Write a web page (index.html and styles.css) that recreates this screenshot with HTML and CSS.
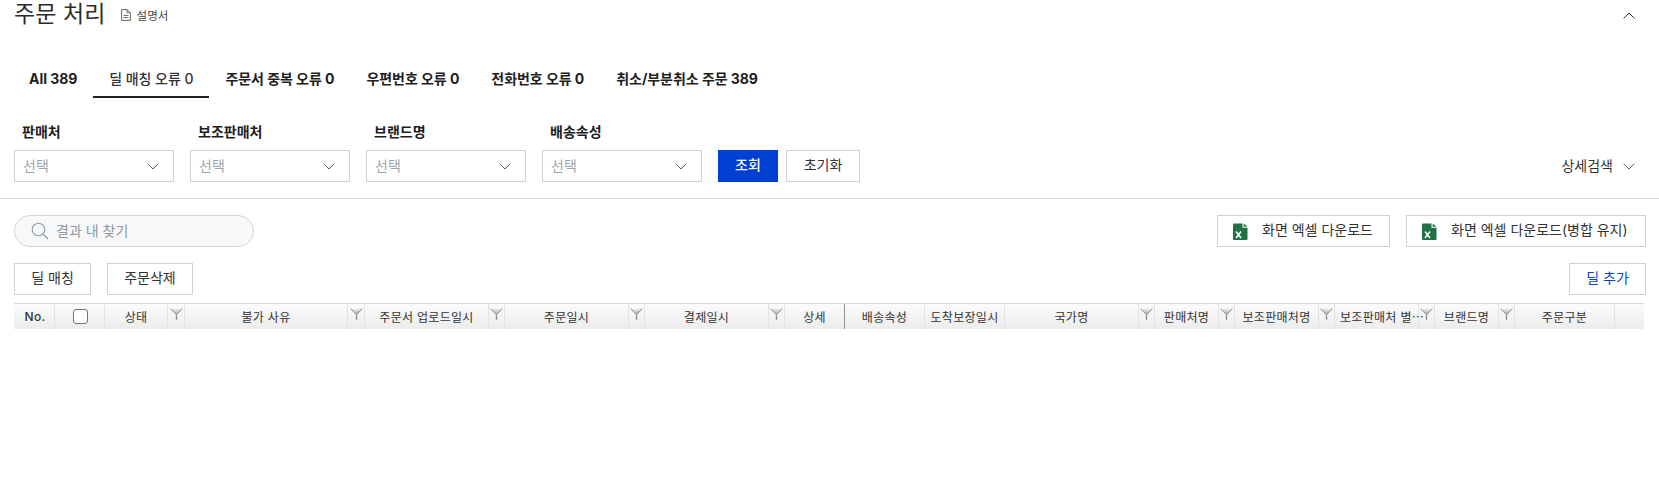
FILE: index.html
```html
<!DOCTYPE html>
<html lang="ko">
<head>
<meta charset="utf-8">
<title>주문 처리</title>
<link rel="stylesheet" href="styles.css">
</head>
<body>
<svg class="sprite" width="0" height="0" aria-hidden="true">
  <defs>
    <linearGradient id="fg" x1="0" y1="0" x2="0" y2="1"><stop offset="0" stop-color="#f0f0f0"/><stop offset=".45" stop-color="#b5b5b5"/><stop offset="1" stop-color="#6e6e6e"/></linearGradient>
  </defs>
  <symbol id="chev" viewBox="0 0 12 7"><path d="M.6.6L6 6l5.4-5.4" fill="none" stroke="currentColor" stroke-width="1"/></symbol>
  <symbol id="funnel" viewBox="0 0 13 12"><path d="M1 .5h11L7.2 6v5.5H5.8V6z" fill="url(#fg)"/><path d="M.6.6L6.2 6.4M12.4.6L6.8 6.4" fill="none" stroke="#7d7d7d" stroke-width=".9"/></symbol>
  <symbol id="xls" viewBox="0 0 15 17"><path d="M0 1.5A1 1 0 0 1 1 .5h8.5v4.2h5V16a1 1 0 0 1-1 1H1a1 1 0 0 1-1-1z" fill="#1f7244"/><path d="M10.6.5l3.9 3.2h-3.9z" fill="#1f7244"/><path d="M3 8.5l5 6.5M8 8.5L3 15" stroke="#fff" stroke-width="1.5"/></symbol>
</svg>

<header class="title-bar">
  <div class="title-left">
    <h1 class="title">주문 처리</h1>
    <a class="manual">
      <svg class="manual-icon" viewBox="0 0 10 12"><path d="M.6.6h5.6l3.2 3v7.8H.6zM2.6 6.4h4.8M2.6 8.6h4.8M6 .8v3h3" fill="none" stroke="#555" stroke-width=".9"/></svg>
      설명서
    </a>
  </div>
  <svg class="chev up"><use href="#chev"/></svg>
</header>

<nav class="tabs">
  <a class="tab">All 389</a>
  <a class="tab active">딜 매칭 오류 0</a>
  <a class="tab">주문서 중복 오류 0</a>
  <a class="tab">우편번호 오류 0</a>
  <a class="tab">전화번호 오류 0</a>
  <a class="tab">취소/부분취소 주문 389</a>
</nav>

<section class="filters">
  <div class="field"><label class="field-label">판매처</label><div class="select"><span>선택</span><svg class="chev"><use href="#chev"/></svg></div></div>
  <div class="field"><label class="field-label">보조판매처</label><div class="select"><span>선택</span><svg class="chev"><use href="#chev"/></svg></div></div>
  <div class="field"><label class="field-label">브랜드명</label><div class="select"><span>선택</span><svg class="chev"><use href="#chev"/></svg></div></div>
  <div class="field"><label class="field-label">배송속성</label><div class="select"><span>선택</span><svg class="chev"><use href="#chev"/></svg></div></div>
  <button class="btn primary">조회</button>
  <button class="btn reset">초기화</button>
  <div class="more">상세검색<svg class="chev"><use href="#chev"/></svg></div>
</section>

<section class="toolbar">
  <div class="row">
    <div class="search">
      <svg class="search-icon" viewBox="0 0 18 18"><circle cx="7.5" cy="7.5" r="6.3" fill="none" stroke="#8f979e" stroke-width="1.1"/><path d="M12 12l5 5" stroke="#8f979e" stroke-width="1.1"/></svg>
      <span>결과 내 찾기</span>
    </div>
    <div class="excel-group">
      <button class="btn excel b1"><svg class="xls"><use href="#xls"/></svg>화면 엑셀 다운로드</button>
      <button class="btn excel b2"><svg class="xls"><use href="#xls"/></svg>화면 엑셀 다운로드(병합 유지)</button>
    </div>
  </div>
  <div class="row second">
    <div class="action-group">
      <button class="btn match">딜 매칭</button>
      <button class="btn del">주문삭제</button>
    </div>
    <button class="btn add">딜 추가</button>
  </div>
</section>

<div class="grid-head">
  <div class="cell latin">No.</div>
  <div class="cell check-cell"><span class="check"></span></div>
  <div class="cell">상태</div>
  <div class="cell fil"><svg class="funnel"><use href="#funnel"/></svg></div>
  <div class="cell">불가 사유</div>
  <div class="cell fil"><svg class="funnel"><use href="#funnel"/></svg></div>
  <div class="cell">주문서 업로드일시</div>
  <div class="cell fil"><svg class="funnel"><use href="#funnel"/></svg></div>
  <div class="cell">주문일시</div>
  <div class="cell fil"><svg class="funnel"><use href="#funnel"/></svg></div>
  <div class="cell">결제일시</div>
  <div class="cell fil"><svg class="funnel"><use href="#funnel"/></svg></div>
  <div class="cell frozen">상세</div>
  <div class="cell">배송속성</div>
  <div class="cell">도착보장일시</div>
  <div class="cell">국가명</div>
  <div class="cell fil"><svg class="funnel"><use href="#funnel"/></svg></div>
  <div class="cell">판매처명</div>
  <div class="cell fil"><svg class="funnel"><use href="#funnel"/></svg></div>
  <div class="cell">보조판매처명</div>
  <div class="cell fil"><svg class="funnel"><use href="#funnel"/></svg></div>
  <div class="cell clip">보조판매처 별⋯</div>
  <div class="cell fil"><svg class="funnel"><use href="#funnel"/></svg></div>
  <div class="cell">브랜드명</div>
  <div class="cell fil"><svg class="funnel"><use href="#funnel"/></svg></div>
  <div class="cell">주문구분</div>
  <div class="cell last"></div>
</div>
</body>
</html>
```
FILE: styles.css
```css
* { box-sizing: border-box; }
html, body { margin: 0; padding: 0; }
body {
  width: 1659px;
  height: 490px;
  overflow: hidden;
  background: #fff;
  color: #222;
  font-family: Inter, "Noto Sans CJK KR", "Noto Sans", sans-serif;
}
.sprite { position: absolute; }

.title-bar {
  height: 28px;
  padding: 1px 24px 0 14px;
  display: flex;
  align-items: center;
  justify-content: space-between;
}
.title-left { display: flex; align-items: center; gap: 15px; }
.title {
  margin: 0;
  font-size: 23px;
  font-weight: 400;
  line-height: 25px;
  letter-spacing: 0.1px;
  color: #2b2b2b;
}
.manual { display: flex; align-items: center; gap: 6px; font-size: 11.5px; color: #444; }
.manual-icon { width: 10px; height: 12px; }
.chev { width: 12px; height: 7px; color: #666; flex: none; display: block; }
.chev.up { transform: rotate(180deg); color: #333; margin-top: 1px; }

.tabs { display: flex; margin-top: 32px; height: 38px; padding-left: 13px; }
.tab {
  padding: 0 16px;
  height: 38px;
  line-height: 38px;
  font-size: 14px;
  font-weight: 700;
  letter-spacing: -0.05px;
  color: #1e1e1e;
  white-space: nowrap;
}
.tab.active { border-bottom: 2px solid #222; font-weight: 500; color: #333; }

.filters {
  position: relative;
  height: 101px;
  padding: 26px 14px 0;
  display: flex;
  gap: 16px;
  border-bottom: 1px solid #dcdfe1;
}
.field { width: 160px; }
.field-label {
  display: block;
  height: 26px;
  padding-left: 8px;
  font-size: 14px;
  font-weight: 700;
  line-height: 16px;
  color: #1e1e1e;
}
.select {
  height: 32px;
  padding: 0 14px 3px 8px;
  border: 1px solid #cfd2d4;
  display: flex;
  align-items: center;
  justify-content: space-between;
  font-size: 14px;
  color: #a0a6ab;
}
.select .chev { margin-top: 3px; }
.btn {
  height: 32px;
  padding: 0 0 4px;
  border: 1px solid #cfd2d4;
  background: #fff;
  font-family: inherit;
  font-size: 14px;
  color: #333;
  white-space: nowrap;
}
.filters .btn { margin-top: 26px; }
.primary { width: 60px; background: #0040d0; border-color: #0040d0; color: #fff; font-weight: 500; }
.reset { width: 74px; margin-left: -8px; }
.more {
  margin-left: auto;
  margin-top: 32px;
  padding-right: 10px;
  height: 18px;
  display: flex;
  align-items: center;
  gap: 10px;
  font-size: 14px;
  color: #333;
}
.more .chev { margin-top: 2px; }

.toolbar { padding: 16px 13px 0 14px; }
.row { display: flex; justify-content: space-between; align-items: center; }
.second { margin-top: 16px; }
.search {
  width: 240px;
  height: 32px;
  padding: 0 0 3px 16px;
  display: flex;
  align-items: center;
  gap: 7px;
  border: 1px solid #d3d6d8;
  border-radius: 16px;
  background: #f7f8f9;
  font-size: 14px;
  color: #8f979e;
}
.search-icon { width: 18px; height: 18px; margin-top: 3px; }
.excel-group, .action-group { display: flex; gap: 16px; }
.excel { display: flex; align-items: center; gap: 14px; padding-left: 15px; }
.excel .xls { margin-top: 4px; }
.b1 { width: 173px; }
.b2 { width: 240px; }
.xls { width: 15px; height: 17px; flex: none; }
.match { width: 77px; }
.del { width: 86px; }
.add { width: 77px; color: #0a45c8; }

.grid-head {
  margin: 8px 0 0 14px;
  width: 1630px;
  height: 26px;
  display: grid;
  grid-template-columns: 41px 50px 63px 17px 163px 17px 124px 16px 124px 16px 124px 16px 60px 80px 80px 134px 16px 64px 16px 84px 16px 84px 16px 64px 16px 100px 29px;
  border-top: 1px solid #d6d8da;
  background: linear-gradient(#fbfbfb, #ececec);
}
.cell {
  display: flex;
  align-items: center;
  justify-content: center;
  min-width: 0;
  padding-bottom: 1px;
  border-right: 1px solid #e0e2e4;
  font-size: 12px;
  letter-spacing: 0.3px;
  color: #333;
  white-space: nowrap;
}
.latin { font-weight: 500; padding-left: 2px; }
.check-cell { padding-left: 2px; }
.fil { align-items: flex-start; padding: 4px 0 0 0; }
.frozen { border-right: 1px solid #8f9396; }
.last { border-right: 0; }
.clip { justify-content: flex-start; padding-left: 5px; }
.funnel { width: 13px; height: 12px; display: block; }
.check {
  width: 15px;
  height: 15px;
  border: 1px solid #70757a;
  border-radius: 3px;
  background: #fff;
}
```
